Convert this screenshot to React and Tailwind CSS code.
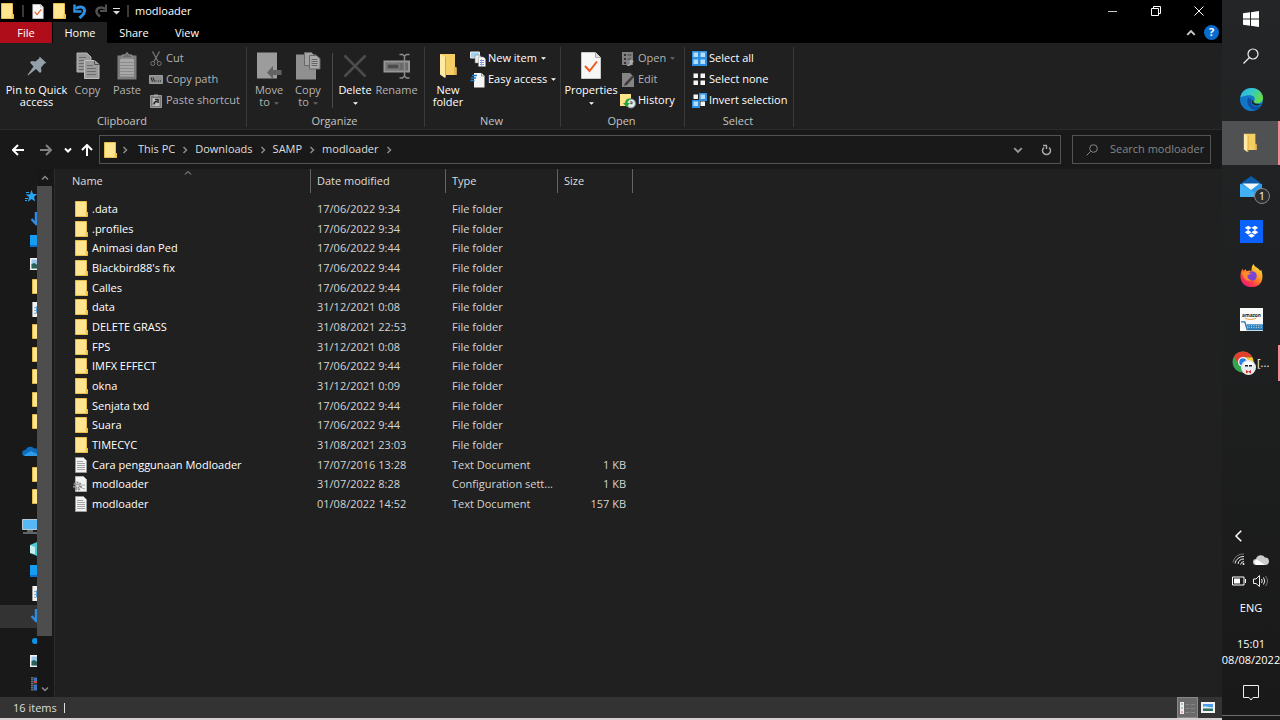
import { useState } from 'react'

const files = [
  { name: '.data', date: '17/06/2022 9:34', type: 'File folder' },
  { name: '.profiles', date: '17/06/2022 9:34', type: 'File folder' },
  { name: 'Animasi dan Ped', date: '17/06/2022 9:44', type: 'File folder' },
  { name: "Blackbird88's fix", date: '17/06/2022 9:44', type: 'File folder' },
  { name: 'Calles', date: '17/06/2022 9:44', type: 'File folder' },
  { name: 'data', date: '31/12/2021 0:08', type: 'File folder' },
  { name: 'DELETE GRASS', date: '31/08/2021 22:53', type: 'File folder' },
  { name: 'FPS', date: '31/12/2021 0:08', type: 'File folder' },
  { name: 'IMFX EFFECT', date: '17/06/2022 9:44', type: 'File folder' },
  { name: 'okna', date: '31/12/2021 0:09', type: 'File folder' },
  { name: 'Senjata txd', date: '17/06/2022 9:44', type: 'File folder' },
  { name: 'Suara', date: '17/06/2022 9:44', type: 'File folder' },
  { name: 'TIMECYC', date: '31/08/2021 23:03', type: 'File folder' },
  { name: 'Cara penggunaan Modloader', date: '17/07/2016 13:28', type: 'Text Document', size: '1 KB', icon: 'text' },
  { name: 'modloader', date: '31/07/2022 8:28', type: 'Configuration sett...', size: '1 KB', icon: 'config' },
  { name: 'modloader', date: '01/08/2022 14:52', type: 'Text Document', size: '157 KB', icon: 'text' },
]

const crumbs = ['This PC', 'Downloads', 'SAMP', 'modloader']

function Folder({ className = 'h-4 w-[13px]' }) {
  return (
    <svg viewBox="0 0 13 16" className={className} preserveAspectRatio="none">
      <path d="M0.500 0.500h11v11h1v4H0.500z" fill="#ffe590" stroke="#e9bd4c" />
      <path d="M10.500 11h2v4.500h-2z" fill="#f3c64a" />
    </svg>
  )
}

function OpenFolder({ className }) {
  return (
    <svg viewBox="0 0 18 26" className={className}>
      <path d="M1 1h15v13l1.500 1v7H6z" fill="#f5cf66" />
      <path d="M15 14h2.500v8H15z" fill="#e8b94a" />
      <path d="M1 1l5 3v21l-5-3.500z" fill="#ffeaa5" />
      <path d="M6 4v21l1-1V4z" fill="#dba93a" />
    </svg>
  )
}

function TextFile() {
  return (
    <svg viewBox="0 0 12 16" className="h-4 w-3">
      <path d="M0.500 0.500h8l3 3v12h-11z" fill="#f2f2f2" stroke="#9a9a9a" />
      <path d="M2 4.500h6M2 6.500h8M2 8.500h8M2 10.500h8M2 12.500h8" stroke="#a4a4a4" />
    </svg>
  )
}

function ConfigFile() {
  return (
    <svg viewBox="0 0 14 16" className="h-4 w-[14px]">
      <path d="M2.500 0.500h8l3 3v12h-11z" fill="#f2f2f2" stroke="#b0b0b0" />
      <circle cx="4.500" cy="10" r="3.500" fill="none" stroke="#8c8c8c" strokeWidth="2" strokeDasharray="2 1" />
      <circle cx="4.500" cy="10" r="2" fill="#d8d8d8" stroke="#8c8c8c" />
      <path d="M9 12l3 1M9 9l3 0" stroke="#a8a8a8" />
    </svg>
  )
}

function CheckPage({ className }) {
  return (
    <svg viewBox="0 0 20 27" className={className}>
      <path d="M0.500 0.500h14l5 5v21h-19z" fill="#f7f7f7" stroke="#c9c9c9" />
      <path d="M14.500 0.500v5h5" fill="#ddd" stroke="#aaa" />
      <path d="M4 14l4.500 5L16 9.500" fill="none" stroke="#f0591e" strokeWidth="2" />
    </svg>
  )
}

function Chevron({ dir = 'right', className = 'h-2 w-2', width = 1.5 }) {
  const paths = { right: 'M2.500 1l3 3-3 3', down: 'M1 2.500l3 3 3-3', up: 'M1 5.500l3-3 3 3', left: 'M5.500 0.500l-3.500 3.500 3.500 3.500' }
  return (
    <svg viewBox="0 0 8 8" className={className}>
      <path d={paths[dir]} fill="none" stroke="currentColor" strokeWidth={width} />
    </svg>
  )
}

function Caret({ className }) {
  return (
    <svg viewBox="0 0 6 3" className={`h-[3px] w-[5px] ${className}`}>
      <path d="M0 0h6L3 3z" fill="currentColor" />
    </svg>
  )
}

const PinIcon = () => (
  <svg viewBox="0 0 20 20" className="h-5 w-5">
    <path d="M12.500 0.500l7 6.500-2 0.500-3.500 4 0.500 4-1.500 1.500-4-4L1 19.500 0.500 19l6-8.500-3.500-4 1.500-1.500 4 0.500 4-3.500z" fill="#93a0ab" />
  </svg>
)

const CopyIcon = () => (
  <svg viewBox="0 0 24 27" className="h-[27px] w-6">
    <path d="M1 1h10l4 4v15H1z" fill="#9b9b9b" stroke="#b4b4b4" />
    <path d="M3 5.500h7M3 8.500h9M3 11.500h9M3 14.500h9M3 17.500h9" stroke="#6c6c6c" />
    <path d="M8.500 8.500h10l4.500 4v14H8.500z" fill="#9b9b9b" stroke="#c0c0c0" />
    <path d="M18.500 8.500v4H23" fill="none" stroke="#555" />
    <path d="M11 13.500h6M11 16.500h9M11 19.500h9M11 22.500h9" stroke="#6c6c6c" />
  </svg>
)

const PasteIcon = () => (
  <svg viewBox="0 0 20 28" className="h-7 w-5">
    <path d="M0.500 3.500h19v24H0.500z" fill="#7d7d7d" />
    <path d="M3 7h14v17.500H3z" fill="#a8a8a8" />
    <path d="M5 6V3h3l2-2.500L12 3h3v3z" fill="#6b6b6b" stroke="#999" />
    <path d="M3 10.500h14M3 13.500h14M3 16.500h14M3 19.500h14M3 22.500h14" stroke="#8b8b8b" />
  </svg>
)

const CutIcon = () => (
  <svg viewBox="0 0 12 16" className="h-4 w-3" fill="none" stroke="#767676">
    <path d="M2.500 0.500l5.500 10M9.500 0.500L4 10.500" strokeWidth="1.300" />
    <circle cx="2.800" cy="12.500" r="2" />
    <circle cx="9.200" cy="12.500" r="2" />
  </svg>
)

const CopyPathIcon = () => (
  <svg viewBox="0 0 14 9" className="h-[9px] w-[14px]">
    <path d="M0.500 0.500h13v8h-13z" fill="#8c8c8c" stroke="#9b9b9b" />
    <path d="M2 2.500l1.500 4M4 2.500l1.500 4M6.500 6h1M9 6h1M11 6h1" stroke="#1c1c1c" />
  </svg>
)

const PasteShortcutIcon = () => (
  <svg viewBox="0 0 12 14" className="h-[14px] w-3">
    <path d="M0.500 1.500h11v12h-11z" fill="#777" stroke="#999" />
    <path d="M4 0.500h4v2H4z" fill="#aaa" />
    <path d="M2.500 4h7v8h-7z" fill="#bdbdbd" />
    <path d="M4 10.500c0-2 1-3 3-3M5 5.500h3v3.500" fill="none" stroke="#222" strokeWidth="1.500" />
  </svg>
)

const MoveIcon = () => (
  <svg viewBox="0 0 26 28" className="h-7 w-[26px]">
    <path d="M1 0.500h20v26H1z" fill="#9c9c9c" />
    <path d="M11 20.500l6-6.500v4h8.500v5H17v4z" fill="#636363" />
  </svg>
)

const CopyToIcon = () => (
  <svg viewBox="0 0 26 28" className="h-7 w-[26px]">
    <path d="M1 2.500h20v25H1z" fill="#909090" />
    <path d="M9.500 0.500h7l3 3v10h-10z" fill="#a3a3a3" stroke="#686868" />
    <path d="M14.500 3.500h7l3.500 3v10.500H14.500z" fill="#aaa" stroke="#686868" />
    <path d="M16.500 7.500h6M16.500 9.500h6M16.500 11.500h6M16.500 13.500h6" stroke="#666" />
  </svg>
)

const DeleteIcon = () => (
  <svg viewBox="0 0 24 24" className="h-6 w-6">
    <path d="M1.500 1.500l21 21M22.500 1.500l-21 21" stroke="#4c4c4c" strokeWidth="2.500" />
  </svg>
)

const RenameIcon = () => (
  <svg viewBox="0 0 28 26" className="h-[26px] w-7">
    <path d="M1.500 8.500h24.500v10H1.500z" fill="#6a6a6a" stroke="#979797" strokeWidth="2" />
    <path d="M4 11h12v5H4z" fill="#4b4b4b" stroke="#888" />
    <path d="M16.500 1.500h3l2 1.500 2-1.500h3M21.500 3v20M16.500 25h3l2-2 2 2h3" fill="none" stroke="#8b8b8b" strokeWidth="1.500" />
  </svg>
)

const NewItemIcon = () => (
  <svg viewBox="0 0 16 16" className="h-4 w-4">
    <path d="M0.500 1h9v6h-9z" fill="#9fd4f3" stroke="#eee" />
    <path d="M5 4h4.500l1.500 1.500V12H5z" fill="#eee" stroke="#777" strokeWidth="0.500" />
    <path d="M8.500 6h5l2 2v7.500h-7z" fill="#fff" stroke="#888" strokeWidth="0.500" />
    <path d="M10 9.500h4M10 11.500h4M10 13.500h4" stroke="#7b8fd6" />
    <path d="M11.500 8v7" stroke="#e49a9a" />
  </svg>
)

const EasyAccessIcon = () => (
  <svg viewBox="0 0 16 16" className="h-4 w-4">
    <path d="M4 1h7.500l3 3v11.500H4z" fill="#f5f5f5" />
    <path d="M11.500 1v3h3" fill="none" stroke="#999" />
    <path d="M2 3.500h5M1 6h5M0.500 8.500h4" stroke="#1a7ad0" strokeWidth="1.500" />
  </svg>
)

const OpenIcon = () => (
  <svg viewBox="0 0 12 14" className="h-[14px] w-3">
    <path d="M0 0h11v13H0z" fill="#808080" />
    <path d="M2 2h2v2H2zM2 6h2v2H2zM2 10h2v2H2z" fill="#333" />
    <path d="M5.500 3h4M5.500 7h4" stroke="#444" />
    <path d="M5 13c2 0 3-1 3-3H6.500L9.500 7l2.500 3h-1.500c0 3-2 4-5.500 4z" fill="#aaa" />
  </svg>
)

const EditIcon = () => (
  <svg viewBox="0 0 12 14" className="h-[14px] w-3">
    <path d="M0 0h8l4 4v10H0z" fill="#858585" />
    <path d="M2 13l1-3 8-8 1.500 1.500L5 12z" fill="#3c3c3c" />
  </svg>
)

const HistoryIcon = () => (
  <svg viewBox="0 0 16 16" className="h-4 w-4">
    <path d="M0 1h11v12H0z" fill="#ffe38a" />
    <circle cx="11" cy="10.500" r="4.500" fill="#dfe6e6" stroke="#7c8c8c" />
    <path d="M11 8v3l2-1.500" fill="none" stroke="#444" />
    <path d="M11.500 6C8 4.500 5 7 5 10H3l3.500 4L10 10H7.500c0-2 2-3.500 4-4z" fill="#23a33a" />
  </svg>
)

function SelectIcon({ on }) {
  const cells = [[1, 1], [8, 1], [1, 8], [8, 8]]
  return (
    <svg viewBox="0 0 15 15" className="h-[15px] w-[15px]">
      {cells.map(([x, y], i) => (
        <g key={i}>
          {on.includes(i) && <rect x={x - 1} y={y - 1} width="8" height="8" fill="#2f8fe0" />}
          <rect x={x + 0.5} y={y + 0.5} width="4.500" height="4.500" fill={on.includes(i) ? '#b5defc' : '#f5f5f5'} />
        </g>
      ))}
    </svg>
  )
}

function LargeButton({ icon, label, sub, caret, dim, className }) {
  return (
    <button type="button" className={`flex shrink-0 flex-col items-center ${dim ? 'text-[#b4b4b4]' : 'text-white'} ${className}`}>
      <span className="flex h-[37px] items-center justify-center">{icon}</span>
      <span className="leading-3 whitespace-nowrap">
        {label}
        {(sub || caret) && <br />}
        {sub}
        {caret && <Caret className={`inline-block ${sub ? 'ml-1' : ''} ${dim ? 'text-[#666]' : ''}`} />}
      </span>
    </button>
  )
}

function SmallButton({ icon, label, caret, dim }) {
  return (
    <button type="button" className={`flex h-[21px] items-center gap-[2px] whitespace-nowrap ${dim ? 'text-[#b4b4b4]' : 'text-white'}`}>
      <span className="flex w-4 justify-center">{icon}</span>
      <span>{label}</span>
      {caret && <Caret className={`ml-[2px] ${dim ? 'text-[#666]' : ''}`} />}
    </button>
  )
}

function SmallStack({ children }) {
  return <div className="pt-px">{children}</div>
}

function Group({ title, className, inner, children }) {
  return (
    <section className={`flex shrink-0 flex-col justify-between border-r border-[#3a3a3a] ${className}`}>
      <div className={`flex ${inner}`}>{children}</div>
      <h2 className="pr-[2px] text-center leading-3 text-[#c4c4c4]">{title}</h2>
    </section>
  )
}

function TitleBar() {
  return (
    <header className="flex h-[22px] shrink-0 items-center bg-black">
      <div className="flex flex-1 items-center pl-px">
        <Folder />
        <span className="mx-2 h-3 w-[2px] bg-[#3a3a3a]" />
        <button type="button" aria-label="Properties" className="w-[21px]"><CheckPage className="h-[15px] w-3" /></button>
        <button type="button" aria-label="New folder" className="w-5"><Folder /></button>
        <button type="button" aria-label="Undo" className="w-[21px]">
          <svg viewBox="0 0 14 15" className="h-[15px] w-[14px]">
            <path d="M3 4.500C7 1.500 12 3 11.500 7.500c-.3 3-3 4.500-5 6.500" fill="none" stroke="#2d8fe2" strokeWidth="3" />
            <path d="M1.500 0.500v7h7" fill="none" stroke="#2d8fe2" strokeWidth="2.500" />
          </svg>
        </button>
        <button type="button" aria-label="Redo" className="w-[19px]">
          <svg viewBox="0 0 14 15" className="h-[15px] w-[14px]">
            <path d="M11 5C8 2.500 2 3 2.500 8c.3 2 1.500 3 3.500 4.500" fill="none" stroke="#505050" strokeWidth="2.500" />
            <path d="M12 0.500v6.500h-6" fill="none" stroke="#505050" strokeWidth="2" />
          </svg>
        </button>
        <button type="button" aria-label="Customize toolbar" className="mr-[7px]">
          <svg viewBox="0 0 7 7" className="h-[7px] w-[7px]">
            <path d="M0 0.500h7" stroke="#ddd" />
            <path d="M0 3h7L3.500 6.500z" fill="#ddd" />
          </svg>
        </button>
        <span className="mr-[6px] h-3 w-[2px] bg-[#3a3a3a]" />
        <h1>modloader</h1>
      </div>
      <div className="mr-[2px] flex h-5 items-center text-white">
        <button type="button" aria-label="Minimize" className="flex w-[43px] justify-center"><span className="h-px w-[9px] bg-[#ccc]" /></button>
        <button type="button" aria-label="Restore" className="flex w-[43px] justify-center">
          <svg viewBox="0 0 10 10" className="h-[10px] w-[10px]" fill="none" stroke="currentColor">
            <path d="M0.500 2.500h7v7h-7zM2.500 2.500v-2h7v7h-2" />
          </svg>
        </button>
        <button type="button" aria-label="Close" className="flex w-[43px] justify-center">
          <svg viewBox="0 0 10 10" className="h-[10px] w-[10px]" stroke="currentColor"><path d="M0.500 0.500l9 9M9.500 0.500l-9 9" /></svg>
        </button>
      </div>
    </header>
  )
}

function Tabs() {
  return (
    <nav className="flex h-[21px] shrink-0 items-stretch bg-black">
      <button type="button" className="mr-px w-[52px] bg-[#b00d1b] pt-px">File</button>
      <button type="button" className="w-[54px] bg-[#202020] pt-px">Home</button>
      <button type="button" className="w-[54px] pt-px">Share</button>
      <button type="button" className="w-[52px] pt-px">View</button>
      <div className="flex flex-1 items-center justify-end gap-2 pr-[3px]">
        <Chevron dir="up" className="h-[10px] w-[10px] text-[#ccc]" />
        <button type="button" aria-label="Help" className="flex h-[15px] w-[15px] items-center justify-center rounded-full bg-[#0a6cce] font-bold">?</button>
      </div>
    </nav>
  )
}

function Ribbon() {
  return (
    <div className="flex h-[87px] shrink-0 border-b border-[#2b2b2b] bg-[#202020] pt-1 pb-[2px]">
      <Group title="Clipboard" className="w-[247px]" inner="pl-1">
        <LargeButton icon={<PinIcon />} label="Pin to Quick" sub="access" className="w-[65px]" />
        <LargeButton icon={<CopyIcon />} label="Copy" dim className="w-[37px]" />
        <LargeButton icon={<PasteIcon />} label="Paste" dim className="w-[42px]" />
        <SmallStack>
          <SmallButton icon={<CutIcon />} label="Cut" dim />
          <SmallButton icon={<CopyPathIcon />} label="Copy path" dim />
          <SmallButton icon={<PasteShortcutIcon />} label="Paste shortcut" dim />
        </SmallStack>
      </Group>
      <Group title="Organize" className="w-[178px]" inner="pl-[3px]">
        <LargeButton icon={<MoveIcon />} label="Move" sub="to" caret dim className="w-[38px]" />
        <LargeButton icon={<CopyToIcon />} label="Copy" sub="to" caret dim className="w-[40px]" />
        <span className="mt-[6px] ml-1 w-px bg-[#4a4a4a]" />
        <LargeButton icon={<DeleteIcon />} label="Delete" caret className="w-[44px]" />
        <LargeButton icon={<RenameIcon />} label="Rename" dim className="w-[39px]" />
      </Group>
      <Group title="New" className="w-[136px]" inner="pl-px">
        <LargeButton icon={<OpenFolder className="h-[26px] w-[18px]" />} label="New" sub="folder" className="w-[44px]" />
        <SmallStack>
          <SmallButton icon={<NewItemIcon />} label="New item" caret />
          <SmallButton icon={<EasyAccessIcon />} label="Easy access" caret />
        </SmallStack>
      </Group>
      <Group title="Open" className="w-[124px]" inner="pl-px">
        <LargeButton icon={<CheckPage className="h-[27px] w-5" />} label="Properties" caret className="w-[58px]" />
        <SmallStack>
          <SmallButton icon={<OpenIcon />} label="Open" caret dim />
          <SmallButton icon={<EditIcon />} label="Edit" dim />
          <SmallButton icon={<HistoryIcon />} label="History" />
        </SmallStack>
      </Group>
      <Group title="Select" className="w-[109px]" inner="pl-[6px]">
        <SmallStack>
          <SmallButton icon={<SelectIcon on={[0, 1, 2, 3]} />} label="Select all" />
          <SmallButton icon={<SelectIcon on={[]} />} label="Select none" />
          <SmallButton icon={<SelectIcon on={[1, 2]} />} label="Invert selection" />
        </SmallStack>
      </Group>
    </div>
  )
}

function Arrow({ className }) {
  return (
    <svg viewBox="0 0 12 12" className={className} fill="none" stroke="currentColor" strokeWidth="2">
      <path d="M12 6H1.500M6 1L1 6l5 5" />
    </svg>
  )
}

function AddressBar() {
  const [query, setQuery] = useState('')
  return (
    <div className="flex h-[39px] shrink-0 items-center bg-[#191919] pr-[11px] pl-3">
      <button type="button" aria-label="Back" className="w-7"><Arrow className="h-3 w-3" /></button>
      <button type="button" aria-label="Forward" className="w-6 text-[#808080]"><Arrow className="h-3 w-3 rotate-180" /></button>
      <button type="button" aria-label="Recent locations" className="w-[17px]"><Chevron dir="down" width={2} /></button>
      <button type="button" aria-label="Up" className="mr-[6px]"><Arrow className="h-3 w-3 rotate-90" /></button>
      <div className="flex h-[29px] flex-1 items-center border border-[#535353] pl-1 text-[#dedede]">
        <Folder />
        <Chevron className="mx-1 h-2 w-2 text-[#8a8a8a]" />
        {crumbs.map((crumb) => (
          <span key={crumb} className="flex items-center">
            <a href="#" className="px-[5px]">{crumb}</a>
            <Chevron className="mx-px h-2 w-2 text-[#8a8a8a]" />
          </span>
        ))}
        <span className="flex-1" />
        <button type="button" aria-label="Previous locations" className="mr-[18px] text-[#999]"><Chevron dir="down" className="h-[10px] w-[10px]" /></button>
        <button type="button" aria-label="Refresh" className="mr-2 text-[#aaa]">
          <svg viewBox="0 0 11 12" className="h-3 w-[11px]" fill="none" stroke="currentColor" strokeWidth="1.500">
            <path d="M8 3.500a4 4 0 1 1-5 0M5.500 5V1.500M2 1.500h4" />
          </svg>
        </button>
      </div>
      <label className="ml-[11px] flex h-[29px] w-[139px] items-center border border-[#535353] pl-[13px] text-[#868686]">
        <svg viewBox="0 0 12 12" className="mr-3 h-3 w-3 shrink-0" fill="none" stroke="currentColor">
          <circle cx="7.500" cy="4.500" r="3.800" />
          <path d="M4.500 7.500L0.500 11.500" />
        </svg>
        <input
          aria-label="Search modloader"
          placeholder="Search modloader"
          value={query}
          onChange={(e) => setQuery(e.target.value)}
          className="w-full min-w-0 bg-transparent outline-none placeholder:text-[#868686]"
        />
      </label>
    </div>
  )
}

const DownloadIcon = () => (
  <svg viewBox="0 0 14 14" className="h-[14px] w-[14px] shrink-0">
    <path d="M6 0v11M1.500 7L6 12l4.500-5" fill="none" stroke="#2e8be0" strokeWidth="2.500" />
  </svg>
)

const DesktopIcon = () => (
  <svg viewBox="0 0 14 12" className="h-3 w-[14px] shrink-0">
    <path d="M0 0h14v12H0z" fill="#159cf5" />
    <path d="M0 10h14v2H0z" fill="#0a74cc" />
  </svg>
)

const PictureIcon = () => (
  <svg viewBox="0 0 14 12" className="h-3 w-[14px] shrink-0">
    <path d="M0.500 0.500h13v11h-13z" fill="#9cc7ec" stroke="#f2f2f2" strokeWidth="2" />
    <path d="M1.500 6l3-1 3 2h5v3.500h-11z" fill="#2b6157" />
  </svg>
)

const DocumentIcon = () => (
  <svg viewBox="0 0 12 16" className="ml-[2px] h-[15px] w-3 shrink-0">
    <path d="M0 0h9l3 3v13H0z" fill="#f2f2f2" />
    <path d="M2 6h2M2 9h2M2 12h2" stroke="#888" />
    <path d="M4 5l3-2v9H4z" fill="#3f97dd" />
  </svg>
)

const StarIcon = () => (
  <svg viewBox="0 0 12 12" className="h-3 w-3 shrink-0">
    <path d="M6.500 0l1.600 4H12L9 7l1.200 4.500L6.500 9 3 12l1-5-3.500-2.500 4.500-.3z" fill="#27a5f5" />
    <path d="M0 8.500h3M1 2.500h3M0 10.500h2" stroke="#27a5f5" />
  </svg>
)

const CloudIcon = () => (
  <svg viewBox="0 0 17 10" className="h-[10px] w-[17px] shrink-0">
    <path d="M3 10a3 3 0 0 1 .5-6A5 5 0 0 1 12 2.500a4 4 0 0 1 5 4V10z" fill="#0f6cbd" />
    <path d="M2 9l7-4 8 4v1H3z" fill="#2c9bea" />
  </svg>
)

const PcIcon = () => (
  <svg viewBox="0 0 16 15" className="h-[15px] w-4 shrink-0">
    <path d="M0.500 0.500h15v10h-15z" fill="#58b8f5" stroke="#b9cad6" />
    <path d="M5 12h6M1 14h14" stroke="#a6b4bd" />
  </svg>
)

const CubeIcon = () => (
  <svg viewBox="0 0 14 14" className="h-[14px] w-[14px] shrink-0">
    <path d="M7 0l7 3v8l-7 3-7-3V3z" fill="#4ccbd2" />
    <path d="M0 3l5 2v7l-5-1z" fill="#c6f0ef" />
  </svg>
)

const MusicIcon = () => (
  <svg viewBox="0 0 14 14" className="h-[14px] w-[14px] shrink-0"><circle cx="5" cy="9" r="3" fill="#0b93ea" /></svg>
)

const VideoIcon = () => (
  <svg viewBox="0 0 14 14" className="h-[14px] w-[14px] shrink-0">
    <path d="M1 0h13v14H1z" fill="#39424d" />
    <path d="M2 0v14" stroke="#999" strokeDasharray="1 1" />
    <path d="M4 1h8v5H4z" fill="#3b77c9" />
    <path d="M4 4h8v2H4z" fill="#c24a3d" />
    <path d="M4 8h8v5H4z" fill="#3b77c9" />
  </svg>
)

const NavFolder = () => <span className="pl-[2px]"><Folder className="h-[15px] w-[13px]" /></span>

const navGroups = [
  { className: 'h-[248px]', items: [[StarIcon, 'Quick access', 1], [DownloadIcon, 'Downloads'], [DesktopIcon, 'Desktop'], [PictureIcon, 'Pictures'], [NavFolder, 'Folder'], [DocumentIcon, 'Documents'], [NavFolder, 'Folder'], [NavFolder, 'Folder'], [NavFolder, 'Folder'], [NavFolder, 'Folder'], [NavFolder, 'Folder']] },
  { className: 'h-[68px]', items: [[CloudIcon, 'OneDrive', 1], [NavFolder, 'Folder'], [NavFolder, 'Folder']] },
  { className: 'h-[180px]', items: [[PcIcon, 'This PC', 1], [CubeIcon, '3D Objects'], [DesktopIcon, 'Desktop'], [DocumentIcon, 'Documents'], [DownloadIcon, 'Downloads', 0, 1], [MusicIcon, 'Music'], [PictureIcon, 'Pictures'], [VideoIcon, 'Videos']] },
]

function NavPane() {
  return (
    <aside className="flex w-[55px] shrink-0 border-r border-[#2c2c2c] bg-[#191919]">
      <div className="flex w-[37px] flex-col gap-[7px] overflow-hidden pt-4">
        {navGroups.map((group, i) => (
          <ul key={i} className={`flex shrink-0 flex-col ${group.className}`}>
            {group.items.map(([Icon, label, root, active], j) => (
              <li key={j} className={`flex flex-1 ${active ? 'bg-[#333]' : ''}`}>
                <a href="#" aria-label={label} className={`flex items-center ${root ? (Icon === StarIcon ? 'pl-[25px]' : 'pl-[22px]') : 'pl-[30px]'}`}>
                  <Icon />
                </a>
              </li>
            ))}
          </ul>
        ))}
      </div>
      <div className="flex w-[15px] flex-col items-center bg-[#171717] text-[#888]">
        <span className="flex h-[17px] items-center"><Chevron dir="up" /></span>
        <span className="h-[450px] w-full bg-[#4d4d4d]" />
        <span className="flex flex-1 items-end pb-1"><Chevron dir="down" /></span>
      </div>
    </aside>
  )
}

function FileIcon({ kind }) {
  if (kind === 'text') return <TextFile />
  if (kind === 'config') return <ConfigFile />
  return <Folder />
}

function FileTable() {
  return (
    <main className="flex-1 bg-[#202020]">
      <table className="h-[345px] w-[578px] table-fixed text-left">
        <colgroup>
          <col className="w-[256px]" />
          <col className="w-[135px]" />
          <col className="w-[112px]" />
          <col className="w-[75px]" />
        </colgroup>
        <thead className="text-[#dedede]">
          <tr className="h-[30px] align-top">
            <th className="p-0 font-normal">
              <div className="relative flex h-6 items-center border-r border-[#636363] pt-px pl-[17px]">
                Name
                <Chevron dir="up" width={1} className="absolute top-0 left-[129px] h-2 w-2 text-[#aaa]" />
              </div>
            </th>
            {['Date modified', 'Type', 'Size'].map((title) => (
              <th key={title} className="p-0 font-normal">
                <div className="flex h-6 items-center border-r border-[#636363] pt-px pl-[6px]">{title}</div>
              </th>
            ))}
          </tr>
        </thead>
        <tbody>
          {files.map((file, i) => (
            <tr key={i} className="leading-4 whitespace-nowrap text-[#d4d4d4]">
              <td className="p-0 text-white">
                <div className="flex items-center pl-[18px]">
                  <span className="flex w-[19px] justify-start">
                    <span className={file.icon === 'config' ? '' : 'pl-[2px]'}><FileIcon kind={file.icon} /></span>
                  </span>
                  {file.name}
                </div>
              </td>
              <td className="p-0 pl-[6px]">{file.date}</td>
              <td className="p-0 pl-[6px]">{file.type}</td>
              <td className="p-0 pr-[7px] text-right">{file.size}</td>
            </tr>
          ))}
        </tbody>
      </table>
    </main>
  )
}

function StatusBar() {
  return (
    <footer className="flex h-[23px] shrink-0 items-center border-b-2 border-[#d6d0d0] bg-[#333] pl-[13px] text-[#dedede]">
      <span className="pt-px">16 items</span>
      <span className="ml-[7px] h-[10px] w-px bg-[#dedede]" />
      <span className="flex-1" />
      <button type="button" aria-label="Details view" className="flex h-full w-[21px] items-center justify-center border border-[#8a8a8a] bg-[#6b6b6b]">
        <svg viewBox="0 0 15 12" className="h-3 w-[15px]">
          <path d="M0 0h4v12H0z" fill="#eee" />
          <path d="M1 2h2M1 6h2" stroke="#7a94b8" />
          <path d="M1 10h2" stroke="#d06060" />
          <path d="M5.500 2.500h4M11 2.500h4M5.500 6.500h4M11 6.500h4M5.500 10.500h4M11 10.500h4" stroke="#858585" />
        </svg>
      </button>
      <button type="button" aria-label="Thumbnail view" className="flex w-[24px] pl-[3px]">
        <svg viewBox="0 0 14 11" className="h-[11px] w-[14px]">
          <path d="M1 1h12v9H1z" fill="#4f9be8" stroke="#f2f2f2" strokeWidth="2" />
          <path d="M2 5c4 0 5 2 10 1v3H2z" fill="#2d6b5c" />
          <path d="M2 5c3-2 5 1 10 0v1.500H2z" fill="#dcecf7" />
        </svg>
      </button>
    </footer>
  )
}

const StartIcon = () => (
  <svg viewBox="0 0 16 16" className="h-4 w-4" fill="#fff">
    <path d="M0 2.300l7-1v6.200H0zM8 1.200L16 0v7.500H8zM0 8.500h7v6.200l-7-1zM8 8.500h8V16l-8-1.200z" />
  </svg>
)

const SearchIcon = () => (
  <svg viewBox="0 0 16 16" className="h-4 w-4" fill="none" stroke="#eee" strokeWidth="1.200">
    <circle cx="10" cy="6" r="5" />
    <path d="M6.500 9.500L0.500 15.500" />
  </svg>
)

const EdgeIcon = () => (
  <svg viewBox="0 0 24 24" className="h-[23px] w-[23px]">
    <defs>
      <linearGradient id="edgeTop" x1="0" y1="0" x2="1" y2="0.500">
        <stop offset="0" stopColor="#2ab4e8" />
        <stop offset="0.500" stopColor="#34c8c8" />
        <stop offset="1" stopColor="#64dc46" />
      </linearGradient>
    </defs>
    <circle cx="12" cy="12" r="12" fill="#1176c8" />
    <path d="M0.500 10C1 4 6 0 12 0c7 0 12 5 12 10.500 0 3.500-2.500 5.500-5.500 5.500-3.500 0-4.500-1.500-3.500-3 1.500-3-1-5.500-5-5.500S1.500 9 .5 10z" fill="url(#edgeTop)" />
    <path d="M8.500 10.500c-2.500 5 1 11.500 7 12.500 3-.8 5-2.200 6.500-4.500-5 2.500-10 .5-10.500-3.500 0-2 1-3 1-3z" fill="#0c4f9f" />
    <path d="M13 12.500c-1.500 2-.5 4.500 2.500 5.500 3 .8 6-.2 8-1.500-1 1-3 .5-5 .3-3 0-5-1.500-5.500-4.300z" fill="#202224" />
  </svg>
)

const MailIcon = () => (
  <svg viewBox="0 0 24 22" className="h-[22px] w-6">
    <path d="M1 8L12 0l11 8z" fill="#0b5cab" />
    <path d="M1 8h22v13H1z" fill="#2b9fee" />
    <path d="M1 8l22 13H1z" fill="#42b2f7" />
    <path d="M3.500 7.500h17L12 14z" fill="#f5f8fa" />
  </svg>
)

const DropboxIcon = () => (
  <svg viewBox="0 0 24 24" className="h-[23px] w-[23px]">
    <path d="M0 0h24v24H0z" fill="#0a62fb" />
    <path d="M8.500 6l3.500 2.200-3.500 2.300L5 8.200zM15.500 6L19 8.200l-3.500 2.300L12 8.200zM8.500 10.500l3.500 2.200L8.500 15 5 12.700zM15.500 10.500l3.500 2.200-3.500 2.300-3.500-2.300zM12 14l3.500 2.200L12 18.500l-3.500-2.300z" fill="#fff" />
  </svg>
)

const FirefoxIcon = () => (
  <svg viewBox="0 0 24 24" className="h-[23px] w-[23px]">
    <defs>
      <linearGradient id="fox" x1="0.900" y1="0" x2="0.200" y2="1">
        <stop offset="0" stopColor="#fff04a" />
        <stop offset="0.450" stopColor="#ff9422" />
        <stop offset="0.750" stopColor="#ff3b47" />
        <stop offset="1" stopColor="#e31587" />
      </linearGradient>
    </defs>
    <path d="M14 0c1 3 5 4 7 7 1 0 1-1 1-1 3 7 2 18-10 18C5 24 0 19 .5 12 .7 8 2 6 3 5l.5 2L6 5.500l1 2c2-1 4-1 5 0 0-3 0-5 2-7.500z" fill="url(#fox)" />
    <circle cx="12.500" cy="12.500" r="5" fill="#7b43d6" />
    <path d="M2 9c4-2 7-1 10 1.500-2 0-3 .5-4.500 2 .5 3 3 4.500 5 4.500-4 1.500-8-1-9-4z" fill="#ff8a2c" />
  </svg>
)

const AmazonIcon = () => (
  <svg viewBox="0 0 24 24" className="h-[23px] w-[23px]">
    <path d="M0 0h24v24H0z" fill="#fafafa" />
    <text x="12" y="9" textAnchor="middle" fontSize="5" fontWeight="bold" fill="#222">amazon</text>
    <path d="M5 10.500c4 2 8 2 12 0" fill="none" stroke="#f19b2c" />
    <path d="M1 14.500h4l2.500 8H24" fill="none" stroke="#2878b0" strokeWidth="1.500" />
    <path d="M7 17h17v5H8.500z" fill="#2b7fb8" />
    <path d="M9 18.500h15M9 20.500h15" stroke="#d8ecf8" strokeDasharray="1 1.500" />
  </svg>
)

const ChromeIcon = () => (
  <svg viewBox="0 0 24 24" className="h-6 w-6">
    <circle cx="11" cy="11" r="10.500" fill="#34a64f" />
    <path d="M2 5.500A10.500 10.500 0 0 1 20.500 6.500H11L7 14z" fill="#e2402f" />
    <path d="M11 6.500h9.500A10.500 10.500 0 0 1 10.500 21.500l5-8z" fill="#fcc934" />
    <circle cx="11" cy="11" r="5" fill="#fff" />
    <circle cx="11" cy="11" r="3.800" fill="#2f7de1" />
    <circle cx="16.500" cy="16.500" r="7.500" fill="#e6ecee" />
    <path d="M12 13c1-3 8-3 9 0v2h-9z" fill="#fff" />
    <path d="M13 14h3v1.500h-3zM17 14h3v1.500h-3z" fill="#1c1c1c" />
    <path d="M14 19l2.500 1.500L19 19v3.500L16.500 21 14 22.500z" fill="#db2a2a" />
  </svg>
)

function TaskButton({ label, className = '', children }) {
  return (
    <button type="button" aria-label={label} className={`flex h-11 w-full shrink-0 items-center justify-center ${className}`}>
      {children}
    </button>
  )
}

function Taskbar() {
  return (
    <aside className="flex w-[58px] shrink-0 flex-col items-center bg-linear-to-b from-[#232526] to-[#191919] text-white">
      <button type="button" aria-label="Start" className="flex h-[38px] items-center"><StartIcon /></button>
      <button type="button" aria-label="Search" className="mb-[3px] flex h-9 items-center"><SearchIcon /></button>
      <TaskButton label="Edge"><EdgeIcon /></TaskButton>
      <TaskButton label="File Explorer" className="border-r-2 border-[#f08a94] bg-[#4f5152]"><OpenFolder className="h-5 w-[14px]" /></TaskButton>
      <TaskButton label="Mail">
        <span className="relative">
          <MailIcon />
          <span className="absolute top-[12px] left-[15px] flex h-4 w-4 items-center justify-center rounded-full border border-[#888] bg-[#2b2d2e]">1</span>
        </span>
      </TaskButton>
      <TaskButton label="Dropbox"><DropboxIcon /></TaskButton>
      <TaskButton label="Firefox"><FirefoxIcon /></TaskButton>
      <TaskButton label="Amazon"><AmazonIcon /></TaskButton>
      <div className="flex h-11 w-full items-center">
        <button type="button" aria-label="Chrome" className="flex flex-1 items-center gap-px pl-[10px]">
          <ChromeIcon />
          [...
        </button>
        <span className="h-9 w-[2px] bg-[#f08a94]" />
      </div>
      <div className="flex w-full flex-1 flex-col items-center justify-end border-b border-[#6d6d6d]">
        <button type="button" aria-label="Show hidden icons" className="mr-6 mb-[10px]"><Chevron dir="left" width={1} className="h-3 w-3" /></button>
        <div className="mr-[3px] mb-3 grid grid-cols-2 items-center justify-items-center gap-x-[6px] gap-y-2">
          <svg viewBox="0 0 14 14" className="h-[14px] w-[14px]" fill="none" stroke="#eee">
            <path d="M1 10.500A10 10 0 0 1 12 2" stroke="#777" />
            <path d="M3 11.500A8.500 8.500 0 0 1 12 4.500M6 12a6 6 0 0 1 6-5M8.500 12.500A4 4 0 0 1 12 9.500" />
            <circle cx="11.500" cy="12" r="1" fill="#eee" stroke="none" />
          </svg>
          <svg viewBox="0 0 16 11" className="h-[11px] w-4">
            <path d="M3 11a3 3 0 0 1 0-6A5 5 0 0 1 12 3.500 3.800 3.800 0 0 1 13 11z" fill="#ccc" />
            <path d="M3 11a3 3 0 0 1 1-5.500l8 5.500z" fill="#fff" />
          </svg>
          <svg viewBox="0 0 14 10" className="h-[10px] w-[14px]">
            <path d="M0.500 1h11.500v8H0.500z" fill="none" stroke="#fff" />
            <path d="M2 2.500h6v5H2z" fill="#fff" />
            <path d="M13.500 3v4" stroke="#fff" />
          </svg>
          <svg viewBox="0 0 16 14" className="h-[14px] w-4" fill="none" stroke="#eee">
            <path d="M0.500 5h2.500L6.500 1.500v11L3 9.500H0.500z" />
            <path d="M8.500 5q1.500 2 0 4M10.500 3.500q2.500 3.500 0 7" />
            <path d="M12.500 2q4 5 0 10" stroke="#777" />
          </svg>
        </div>
        <span className="mb-5 leading-4">ENG</span>
        <time className="mb-[17px] text-center leading-4 whitespace-nowrap">15:01<br />08/08/2022</time>
        <button type="button" aria-label="Notifications" className="mb-[14px]">
          <svg viewBox="0 0 16 16" className="h-4 w-4" fill="none" stroke="#eee">
            <path d="M0.500 0.500h15v12h-5.500l-2 2.500-2-2.500H0.500z" />
          </svg>
        </button>
      </div>
      <div className="h-1 w-full shrink-0" />
    </aside>
  )
}

export default function App() {
  return (
    <div className="flex h-screen w-full overflow-hidden bg-[#202020] font-['Open_Sans',sans-serif] text-[11px] text-white">
      <div className="flex min-w-0 flex-1 flex-col">
        <TitleBar />
        <Tabs />
        <Ribbon />
        <AddressBar />
        <div className="flex min-h-0 flex-1">
          <NavPane />
          <FileTable />
        </div>
        <StatusBar />
      </div>
      <Taskbar />
    </div>
  )
}
